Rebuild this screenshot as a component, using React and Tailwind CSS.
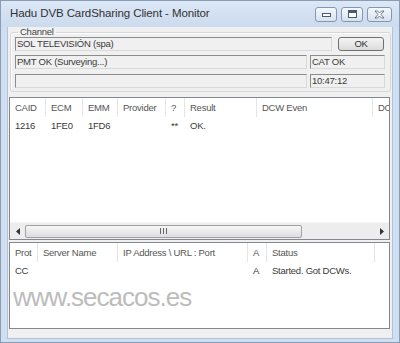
import React from "react";

const UI = "font-['Liberation_Sans',Arial,sans-serif] text-[9.5px] tracking-[-0.25px] leading-none";

function Field({ w, children }) {
  return (
    <div
      className={`h-[14px] ${w} shrink-0 bg-[#f0f0f0] border border-t-[#8c8c8c] border-l-[#8c8c8c] border-r-[#d9d9d9] border-b-[#d9d9d9] flex items-center pl-[1px] text-[#3a3a3a] overflow-hidden whitespace-nowrap`}
    >
      {children}
    </div>
  );
}

function TitleBtn({ w, children }) {
  return (
    <div
      className={`h-[15px] ${w} rounded-[3px] border border-[#8597b0] bg-gradient-to-b from-[#f4f8fc] to-[#d7e2ef] flex items-center justify-center`}
    >
      {children}
    </div>
  );
}

const h1 = [
  ["CAID", "w-[36px]"],
  ["ECM", "w-[37px]"],
  ["EMM", "w-[35px]"],
  ["Provider", "w-[48px]"],
  ["?", "w-[19px]"],
  ["Result", "w-[72px]"],
  ["DCW Even", "w-[116px]"],
  ["DC", "w-[17px]"],
];
const r1 = ["1216", "1FE0", "1FD6", "", "**", "OK.", "", ""];

const h2 = [
  ["Prot", "w-[28px]"],
  ["Server Name", "w-[80px]"],
  ["IP Address \\ URL : Port", "w-[130px]"],
  ["A", "w-[19px]"],
  ["Status", "w-[108px]"],
  ["", "w-[15px]"],
];
const r2 = ["CC", "", "", "A", "Started. Got DCWs.", ""];

function Header({ cols }) {
  return (
    <div className="h-[19px] flex shrink-0 bg-white">
      {cols.map(([t, w], i) => (
        <div
          key={i}
          className={`${w} shrink-0 h-full border-r border-[#e3e5e8] pl-[5px] flex items-center whitespace-nowrap overflow-hidden text-[#555555]`}
        >
          {t}
        </div>
      ))}
    </div>
  );
}

function Row({ cols, vals }) {
  return (
    <div className="h-[17px] flex shrink-0">
      {cols.map(([, w], i) => (
        <div
          key={i}
          className={`${w} shrink-0 h-full pl-[5px] flex items-center whitespace-nowrap overflow-hidden text-[#3a3a3a]`}
        >
          {vals[i]}
        </div>
      ))}
    </div>
  );
}

export default function App() {
  return (
    <div className={`w-[400px] h-[343px] flex flex-col bg-[#cfdef0] border border-[#8a9db5] ${UI}`}>
      {/* Title bar */}
      <div className="h-[26px] shrink-0 flex items-center pl-[9px] pr-[7px] bg-gradient-to-b from-[#dce8f6] to-[#cbdaee]">
        <span className="font-['Liberation_Sans',sans-serif] text-[11.5px] tracking-[-0.1px] text-[#333]">
          Hadu DVB CardSharing Client - Monitor
        </span>
        <div className="ml-auto flex items-center gap-[4px]">
          <TitleBtn w="w-[22px]">
            <svg width="9" height="5" viewBox="0 0 9 5">
              <rect x="0.5" y="1.5" width="8" height="3" fill="#fff" stroke="#4a5a70" />
            </svg>
          </TitleBtn>
          <TitleBtn w="w-[22px]">
            <svg width="9" height="8" viewBox="0 0 9 8">
              <rect x="0.5" y="0.5" width="8" height="7" fill="#fff" stroke="#4a5a70" />
              <rect x="1" y="1" width="7" height="2" fill="#4a5a70" />
            </svg>
          </TitleBtn>
          <TitleBtn w="w-[25px]">
            <svg width="11" height="9" viewBox="0 0 11 9">
              <path
                d="M1 1 L3.5 1 L5.5 3 L7.5 1 L10 1 L7 4.5 L10 8 L7.5 8 L5.5 6 L3.5 8 L1 8 L4 4.5 Z"
                fill="#fff"
                stroke="#4a5a70"
                strokeWidth="0.8"
              />
            </svg>
          </TitleBtn>
        </div>
      </div>

      {/* Client area */}
      <div className="flex-1 mx-[6px] mb-[3px] bg-[#f0f0f0] border-x border-b border-[#b4c4d8] flex flex-col">
        {/* Channel group */}
        <fieldset className="mx-[2px] border border-[#d2d8de] rounded-[3px] pl-[4px] pr-[5px] pb-[3px] shadow-[inset_1px_1px_0_#ffffff]">
          <legend className="ml-[3px] px-[2px] leading-[10px] text-[#444]">Channel</legend>
          <div className="flex flex-col">
            <div className="flex items-center gap-[6px]">
              <Field w="w-[317px]">SOL TELEVISIÓN (spa)</Field>
              <div className="h-[14px] w-[46px] rounded-[3px] border border-[#707070] bg-gradient-to-b from-[#f4f4f4] to-[#dcdcdc] flex items-center justify-center text-[#333]">
                OK
              </div>
            </div>
            <div className="flex gap-[3px] mt-[4px]">
              <Field w="w-[292px]">PMT OK (Surveying...)</Field>
              <Field w="w-[75px]">CAT OK</Field>
            </div>
            <div className="flex gap-[3px] mt-[5px]">
              <Field w="w-[292px]"></Field>
              <Field w="w-[75px]">10:47:12</Field>
            </div>
          </div>
        </fieldset>

        {/* List 1 */}
        <div className="mt-[5px] ml-[1px] mr-[2px] h-[143px] shrink-0 border border-[#828790] bg-white flex flex-col overflow-hidden">
          <Header cols={h1} />
          <Row cols={h1} vals={r1} />
          <div className="flex-1" />
          <div className="h-[17px] shrink-0 bg-[#ededed] border-t border-[#f7f7f7] flex items-center">
            <div className="w-[15px] h-full flex items-center justify-center">
              <svg width="4" height="7" viewBox="0 0 4 7">
                <path d="M4 0 L0 3.5 L4 7 Z" fill="#333" />
              </svg>
            </div>
            <div className="w-[277px] h-[13px] rounded-[2px] border border-[#a0a0a0] bg-gradient-to-b from-[#f6f6f6] to-[#dedede] flex items-center justify-center">
              <svg width="7" height="6" viewBox="0 0 7 6">
                <path d="M0.5 0 V6 M3.5 0 V6 M6.5 0 V6" stroke="#666" strokeWidth="1" />
              </svg>
            </div>
            <div className="flex-1" />
            <div className="w-[15px] h-full flex items-center justify-center">
              <svg width="4" height="7" viewBox="0 0 4 7">
                <path d="M0 0 L4 3.5 L0 7 Z" fill="#333" />
              </svg>
            </div>
          </div>
        </div>

        {/* List 2 */}
        <div className="relative mt-[2px] ml-[1px] mr-[2px] h-[87px] shrink-0 border border-[#828790] bg-white flex flex-col overflow-hidden">
          <Header cols={h2} />
          <Row cols={h2} vals={r2} />
          <div className="absolute left-[3px] top-[41px] font-['Liberation_Sans',sans-serif] text-[26px] leading-[26px] tracking-[-1px] text-[#bcbcbc]">
            www.secacos.es
          </div>
        </div>
      </div>
    </div>
  );
}
